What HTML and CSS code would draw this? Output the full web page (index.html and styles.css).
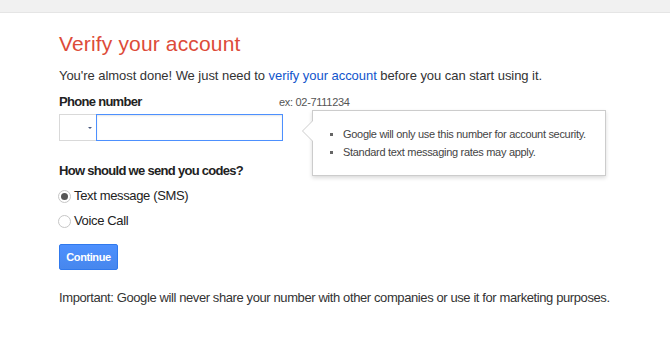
FILE: index.html
```html
<!DOCTYPE html>
<html lang="en">
<head>
    <meta charset="UTF-8">
    <title>Verify your account</title>
    <link rel="stylesheet" href="styles.css">
</head>
<body>
    <div class="top-bar"></div>

    <div class="main">
        <h1>Verify your account</h1>
        <p class="intro">You're almost done! We just need to <a href="#">verify your account</a> before you can start using it.</p>

        <div class="label-row">
            <span class="label">Phone number</span>
            <span class="hint">ex: 02-7111234</span>
        </div>

        <div class="field-row">
            <div class="country-select"><span class="arrow"></span></div>
            <input class="phone-input" type="text">

            <div class="bubble">
                <ul>
                    <li>Google will only use this number for account security.</li>
                    <li>Standard text messaging rates may apply.</li>
                </ul>
            </div>
        </div>

        <div class="label question">How should we send you codes?</div>

        <div class="radio-row">
            <span class="radio checked"></span>Text message (SMS)
        </div>
        <div class="radio-row">
            <span class="radio"></span>Voice Call
        </div>

        <button class="continue-btn">Continue</button>

        <p class="note">Important: Google will never share your number with other companies or use it for marketing purposes.</p>
    </div>
</body>
</html>
```

FILE: styles.css
```css
* {
    margin: 0;
    padding: 0;
    box-sizing: border-box;
}

body {
    font-family: 'Liberation Sans', Arial, sans-serif;
    font-size: 13px;
    line-height: 16px;
    color: #333;
    background: #fff;
}

.top-bar {
    height: 13px;
    background: #f1f1f1;
    border-bottom: 1px solid #e5e5e5;
}

.main {
    padding-left: 59px;
}

h1 {
    margin-top: 19px;
    font-size: 21px;
    line-height: 24px;
    letter-spacing: 0.15px;
    font-weight: normal;
    color: #dd4b39;
}

.intro {
    margin-top: 12px;
    letter-spacing: -0.05px;
}

.intro a {
    color: #15c;
    text-decoration: none;
}

.label-row {
    display: flex;
    align-items: baseline;
    margin-top: 10px;
}

.label {
    font-weight: bold;
    color: #222;
    letter-spacing: -0.7px;
}

.label-row .label {
    width: 220px;
}

.hint {
    font-size: 11px;
    color: #555;
    letter-spacing: -0.3px;
}

.field-row {
    position: relative;
    display: flex;
    margin-top: 4px;
    height: 27px;
}

.country-select {
    width: 37px;
    height: 27px;
    border: 1px solid #d9d9d9;
    border-right: none;
    position: relative;
}

.arrow {
    position: absolute;
    left: 28px;
    top: 12px;
    border-left: 2px solid transparent;
    border-right: 2px solid transparent;
    border-top: 2px solid #4a5a80;
}

.phone-input {
    width: 187px;
    height: 27px;
    border: 1px solid #4d90fe;
    box-shadow: inset 0 1px 2px rgba(0, 0, 0, 0.1);
    outline: none;
    font-family: inherit;
    font-size: 13px;
}

.bubble {
    position: absolute;
    left: 253px;
    top: -4px;
    width: 294px;
    height: 66px;
    border: 1px solid #ccc;
    background: #fff;
    box-shadow: 0 2px 4px rgba(0, 0, 0, 0.15);
    padding: 14px 0 0 30px;
}

.bubble::before,
.bubble::after {
    content: '';
    position: absolute;
    top: 9px;
    border-style: solid;
    border-color: transparent;
}

.bubble::before {
    left: -11px;
    border-width: 11px 11px 11px 0;
    border-right-color: #ccc;
}

.bubble::after {
    left: -10px;
    border-width: 11px 11px 11px 0;
    border-right-color: #fff;
}

.bubble ul {
    list-style: none;
}

.bubble li {
    position: relative;
    font-size: 11px;
    line-height: 18px;
    letter-spacing: -0.3px;
    color: #444;
}

.bubble li::before {
    content: '';
    position: absolute;
    left: -13px;
    top: 8px;
    width: 3px;
    height: 3px;
    background: #666;
}

.question {
    margin-top: 22px;
}

.radio-row {
    display: flex;
    align-items: center;
    height: 16px;
    margin-top: 9px;
    color: #222;
    letter-spacing: -0.35px;
}

.radio {
    width: 13px;
    height: 13px;
    border: 1px solid #c6c6c6;
    border-radius: 50%;
    margin-right: 3px;
    margin-left: -1px;
    position: relative;
    background: #fff;
}

.radio.checked::after {
    content: '';
    position: absolute;
    left: 2px;
    top: 2px;
    width: 7px;
    height: 7px;
    border-radius: 50%;
    background: #555;
}

.continue-btn {
    display: block;
    margin-top: 15px;
    width: 59px;
    height: 26px;
    border: 1px solid #3079ed;
    border-radius: 2px;
    background: linear-gradient(#4d90fe, #4787ed);
    color: #fff;
    font-family: inherit;
    font-size: 11px;
    font-weight: bold;
    letter-spacing: -0.4px;
}

.note {
    margin-top: 20px;
    letter-spacing: -0.4px;
}
```
